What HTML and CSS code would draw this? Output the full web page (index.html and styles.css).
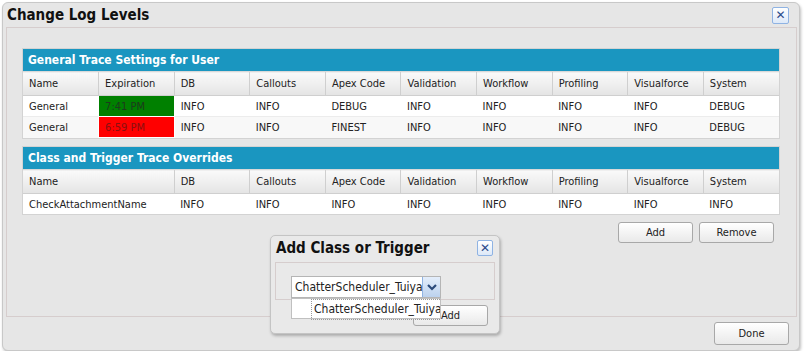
FILE: index.html
```html
<!DOCTYPE html>
<html lang="en">
<head>
    <meta charset="UTF-8">
    <title>Change Log Levels</title>
    <link rel="stylesheet" href="styles.css">
</head>
<body>
    <div class="window">
        <div class="window-header">
            <h1>Change Log Levels</h1>
            <span class="close-btn">&#x2715;</span>
        </div>
        <div class="window-body">
            <div class="trace-table">
                <div class="table-title">General Trace Settings for User</div>
                <table>
                    <tr class="head">
                        <th>Name</th><th>Expiration</th><th>DB</th><th>Callouts</th><th>Apex Code</th>
                        <th>Validation</th><th>Workflow</th><th>Profiling</th><th>Visualforce</th><th>System</th>
                    </tr>
                    <tr>
                        <td>General</td><td class="exp-ok">7:41 PM</td><td>INFO</td><td>INFO</td><td>DEBUG</td>
                        <td>INFO</td><td>INFO</td><td>INFO</td><td>INFO</td><td>DEBUG</td>
                    </tr>
                    <tr class="alt">
                        <td>General</td><td class="exp-late">6:59 PM</td><td>INFO</td><td>INFO</td><td>FINEST</td>
                        <td>INFO</td><td>INFO</td><td>INFO</td><td>INFO</td><td>DEBUG</td>
                    </tr>
                </table>
            </div>
            <div class="trace-table">
                <div class="table-title">Class and Trigger Trace Overrides</div>
                <table>
                    <tr class="head">
                        <th colspan="2">Name</th><th>DB</th><th>Callouts</th><th>Apex Code</th>
                        <th>Validation</th><th>Workflow</th><th>Profiling</th><th>Visualforce</th><th>System</th>
                    </tr>
                    <tr>
                        <td colspan="2">CheckAttachmentName</td><td>INFO</td><td>INFO</td><td>INFO</td>
                        <td>INFO</td><td>INFO</td><td>INFO</td><td>INFO</td><td>INFO</td>
                    </tr>
                </table>
            </div>
            <div class="table-buttons">
                <button class="btn">Add</button>
                <button class="btn">Remove</button>
            </div>
        </div>
        <div class="window-footer">
            <button class="btn">Done</button>
        </div>

        <!-- popup dialog -->
        <div class="popup">
            <div class="popup-header">
                <h2>Add Class or Trigger</h2>
                <span class="close-btn small">&#x2715;</span>
            </div>
            <div class="popup-body">
                <div class="combo">
                    <span class="combo-text">ChatterScheduler_Tuiya</span>
                    <span class="combo-arrow">
                        <svg width="10" height="7" viewBox="0 0 10 7"><path d="M1 1 L5 5 L9 1" fill="none" stroke="#2b4a7a" stroke-width="2.2"/></svg>
                    </span>
                </div>
            </div>
            <div class="popup-footer">
                <button class="btn">Add</button>
            </div>
            <div class="combo-list">
                <div class="combo-item">ChatterScheduler_Tuiya</div>
            </div>
        </div>
    </div>
</body>
</html>
```
FILE: styles.css
```css
body {
    margin: 0;
    background: #ffffff;
    font-family: "DejaVu Sans Condensed", "DejaVu Sans", sans-serif;
    font-size: 11px;
    color: #222;
}
.window {
    position: relative;
    margin: 2px 0 0 2px;
    width: 796px;
    height: 347px;
    background-color: #e6e6e6;
    border: 1px solid #c8c8c8;
    border-radius: 6px;
    box-shadow: 1px 2px 3px rgba(0, 0, 0, 0.25);
    display: flex;
    flex-direction: column;
}
.window-header {
    display: flex;
    justify-content: space-between;
    align-items: center;
    height: 24px;
    padding: 0 10px 0 4px;
}
.window-header h1 {
    margin: 0;
    font-size: 15px;
    font-weight: bold;
    color: #111;
}
.close-btn {
    display: flex;
    align-items: center;
    justify-content: center;
    width: 15px;
    height: 15px;
    border: 1px solid #8fb3e3;
    border-radius: 2px;
    background: linear-gradient(#ffffff, #dde9f8);
    color: #2b4a8a;
    font-family: "DejaVu Sans", sans-serif;
    font-size: 12px;
    line-height: 1;
}
.window-body {
    margin: 0 0 0 3px;
    width: 758px;
    height: 268px;
    padding: 20px 16px 0 15px;
    border: 1px solid #d6cdcd;
}
.trace-table {
    border: 1px solid #d3d3d3;
    background: #fff;
    margin-bottom: 7px;
}
.table-title {
    background-color: #1a96c0;
    color: #fff;
    font-weight: bold;
    font-size: 12px;
    height: 22px;
    line-height: 22px;
    padding-left: 5px;
}
table {
    width: 100%;
    border-collapse: collapse;
    table-layout: fixed;
}
th {
    text-align: left;
    font-weight: normal;
    height: 23px;
    padding: 0 0 0 6px;
    background: linear-gradient(#fafafa, #e4e4e4);
    border-left: 1px solid #cfcfcf;
    border-top: 1px solid #d9d9d9;
    border-bottom: 1px solid #cfcfcf;
    color: #222;
}
th:first-child {
    border-left: none;
}
td {
    height: 20px;
    padding: 0 0 0 6px;
    border-top: 1px solid #ececec;
    white-space: nowrap;
    overflow: hidden;
}
tr.alt td {
    background-color: #f8f8f8;
}
td.exp-ok {
    background-color: #008000;
    color: #1d3a1d;
    border: 1px solid #fff;
}
tr.alt td.exp-late {
    background-color: #ff0000;
    color: #8a1010;
    border: 1px solid #fff;
}
.table-buttons {
    display: flex;
    justify-content: flex-end;
    gap: 6px;
    padding-right: 6px;
}
.btn {
    width: 75px;
    height: 21px;
    border: 1px solid #a8a8a8;
    border-radius: 3px;
    background: linear-gradient(#ffffff, #e9e9e9);
    font-family: "DejaVu Sans Condensed", "DejaVu Sans", sans-serif;
    font-size: 11px;
    color: #222;
    cursor: pointer;
}
.window-footer {
    display: flex;
    justify-content: flex-end;
    padding: 5px 10px 0 0;
}
.window-footer .btn {
    height: 23px;
}
.popup {
    position: absolute;
    left: 267px;
    top: 232px;
    width: 228px;
    height: 97px;
    background-color: #e9e9e9;
    border: 1px solid #c4c4c4;
    border-radius: 5px;
    box-shadow: 1px 2px 3px rgba(0, 0, 0, 0.25);
}
.popup-header {
    display: flex;
    justify-content: space-between;
    align-items: center;
    height: 24px;
    padding: 0 6px 0 5px;
}
.popup-header h2 {
    margin: 0;
    font-size: 15px;
    font-weight: bold;
    color: #111;
}
.close-btn.small {
    width: 14px;
    height: 14px;
}
.popup-body {
    margin: 2px 4px 0 4px;
    height: 38px;
    border: 1px solid #d6cdcd;
    padding: 13px 0 0 15px;
    box-sizing: border-box;
}
.combo {
    display: flex;
    width: 150px;
    height: 22px;
    background: #fff;
    border: 1px solid #b5b5b5;
    box-sizing: border-box;
}
.combo-text {
    flex: 1;
    overflow: hidden;
    white-space: nowrap;
    font-size: 12px;
    line-height: 20px;
    padding-left: 3px;
}
.combo-arrow {
    width: 17px;
    display: flex;
    align-items: center;
    justify-content: center;
    background: linear-gradient(#e4eefb, #bcd2ee);
    border-left: 1px solid #8fb3e3;
}
.popup-footer {
    display: flex;
    justify-content: flex-end;
    padding: 5px 11px 0 0;
}
.combo-list {
    position: absolute;
    left: 20px;
    top: 62px;
    width: 150px;
    height: 21px;
    background: #fff;
    border: 1px solid #c0c0c0;
    box-sizing: border-box;
    padding-left: 19px;
}
.combo-item {
    height: 19px;
    line-height: 18px;
    border: 1px dotted #9a9a9a;
    border-right: none;
    padding-left: 2px;
    font-size: 12px;
    white-space: nowrap;
    overflow: hidden;
}
```
